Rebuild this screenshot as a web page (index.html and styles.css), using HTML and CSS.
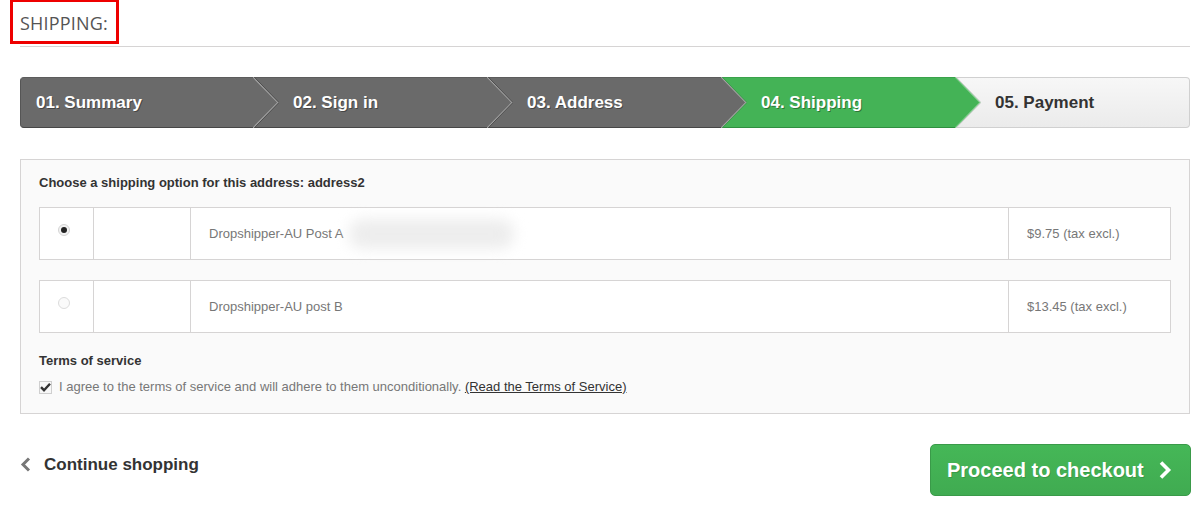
FILE: index.html
```html
<!DOCTYPE html>
<html>
<head>
<meta charset="utf-8">
<link rel="stylesheet" href="styles.css">
</head>
<body>
<div class="page">
  <h1 class="page-heading"><span class="marked">SHIPPING:</span></h1>

  <ul class="steps">
    <li class="done"><span>01. Summary</span>
      <svg class="tip" width="26" height="51" viewBox="0 0 26 51"><polygon points="0,0 25,25.5 0,51" fill="#6a6a6a"/><polyline points="0,0 25,25.5 0,51" fill="none" stroke="#a3a3a3" stroke-width="1.2"/><polyline points="1.2,0 26,25.5 1.2,51" fill="none" stroke="#4f4f4f" stroke-width="1"/></svg>
    </li>
    <li class="done"><span>02. Sign in</span>
      <svg class="tip" width="26" height="51" viewBox="0 0 26 51"><polygon points="0,0 25,25.5 0,51" fill="#6a6a6a"/><polyline points="0,0 25,25.5 0,51" fill="none" stroke="#a3a3a3" stroke-width="1.2"/><polyline points="1.2,0 26,25.5 1.2,51" fill="none" stroke="#4f4f4f" stroke-width="1"/></svg>
    </li>
    <li class="done"><span>03. Address</span>
      <svg class="tip" width="26" height="51" viewBox="0 0 26 51"><polygon points="0,0 25,25.5 0,51" fill="#6a6a6a"/><polyline points="0,0 25,25.5 0,51" fill="none" stroke="#a3a3a3" stroke-width="1.2"/><polyline points="1.2,0 26,25.5 1.2,51" fill="none" stroke="#3f9a4e" stroke-width="1"/></svg>
    </li>
    <li class="current"><span>04. Shipping</span>
      <svg class="tip" width="26" height="51" viewBox="0 0 26 51"><polygon points="0,0 25,25.5 0,51" fill="#44b356"/><polyline points="0,0 25,25.5 0,51" fill="none" stroke="#7fcc8b" stroke-width="1.2"/><polyline points="1.2,0 26,25.5 1.2,51" fill="none" stroke="#d0d0d0" stroke-width="1"/></svg>
    </li>
    <li class="todo"><span>05. Payment</span></li>
  </ul>

  <div class="carrier-box">
    <p class="carrier-title">Choose a shipping option for this address: address2</p>

    <div class="option-row">
      <div class="cell radio-cell"><span class="radio checked"></span></div>
      <div class="cell logo-cell"></div>
      <div class="cell name-cell">Dropshipper-AU Post A <span class="smear"></span></div>
      <div class="cell price-cell">$9.75 (tax excl.)</div>
    </div>

    <div class="option-row">
      <div class="cell radio-cell"><span class="radio"></span></div>
      <div class="cell logo-cell"></div>
      <div class="cell name-cell">Dropshipper-AU post B</div>
      <div class="cell price-cell">$13.45 (tax excl.)</div>
    </div>

    <p class="terms-title">Terms of service</p>
    <p class="terms"><span class="checkbox"><svg width="11" height="10" viewBox="0 0 11 10"><path d="M1 5.2 L4 8.2 L10 1.8" fill="none" stroke="#333" stroke-width="2.4"/></svg></span><span class="terms-text">I agree to the terms of service and will adhere to them unconditionally. <a href="#">(Read the Terms of Service)</a></span></p>
  </div>

  <div class="nav-row">
    <a class="continue" href="#"><svg width="11" height="15" viewBox="0 0 11 15"><path d="M9 1.5 L3 7.5 L9 13.5" fill="none" stroke="#777" stroke-width="3"/></svg>Continue shopping</a>
    <a class="checkout" href="#">Proceed to checkout<svg width="14" height="20" viewBox="0 0 14 20"><path d="M3 2.5 L10.5 10 L3 17.5" fill="none" stroke="#fff" stroke-width="3.6"/></svg></a>
  </div>
</div>
</body>
</html>
```

FILE: styles.css
```css
* { box-sizing: border-box; }
html, body { margin: 0; padding: 0; background: #fff; }
body { font-family: "Liberation Sans", Arial, sans-serif; font-size: 13px; color: #777; }

.page { width: 1170px; margin-left: 20px; }

.page-heading {
  margin: 0;
  height: 47px;
  border-bottom: 1px solid #d6d4d4;
  font-family: "Open Sans", sans-serif;
  font-weight: 400;
  font-size: 18px;
  line-height: 22px;
  letter-spacing: 0.2px;
  color: #555454;
  position: relative;
}
.marked {
  display: inline-block;
  margin-left: -10px;
  margin-top: -1px;
  padding: 10px 8px 7px 7px;
  border: 3px solid #ee0000;
}

.steps {
  list-style: none;
  margin: 30px 0 0 0;
  padding: 0;
  display: flex;
  height: 51px;
}
.steps li {
  position: relative;
  flex: 0 0 234px;
  height: 51px;
  display: flex;
  align-items: center;
  padding-left: 39px;
  font: bold 17px/21px "Liberation Sans", Arial, sans-serif;
  border-top: 1px solid #5c5c5c;
  border-bottom: 1px solid #464646;
}
.steps li:first-child { padding-left: 15px; border-left: 1px solid #555; border-radius: 4px 0 0 4px; }
.steps li span { text-shadow: 1px 1px 0 rgba(0,0,0,0.35); }
.steps .done { background: #6a6a6a; color: #fff; }
.steps .current { background: #44b356; color: #fff; border-top-color: #3aa24b; border-bottom-color: #2f8f3f; }
.steps .todo {
  flex: 1 1 auto;
  background: linear-gradient(#f7f7f7, #ebebeb);
  color: #333;
  border: 1px solid #d0d0d0;
  border-left: 0;
  border-radius: 0 4px 4px 0;
}
.steps .todo span { text-shadow: none; }
.tip { position: absolute; right: -25px; top: -1px; z-index: 2; }

.carrier-box {
  margin-top: 31px;
  border: 1px solid #d6d4d4;
  background: #fafafa;
  padding: 15px 18px 18px 18px;
}
.carrier-title {
  margin: 0 0 16px 0;
  font-weight: bold;
  color: #333;
  line-height: 16px;
}
.option-row {
  display: flex;
  height: 53px;
  border: 1px solid #d6d4d4;
  background: #fff;
  margin-bottom: 20px;
}
.cell { display: flex; align-items: center; border-left: 1px solid #d6d4d4; }
.cell:first-child { border-left: 0; }
.radio-cell { width: 53px; align-items: flex-start; padding-left: 18px; padding-top: 16px; }
.logo-cell { width: 97px; }
.name-cell { width: 818px; padding-left: 18px; color: #777; }
.price-cell { flex: 1; padding-left: 18px; color: #777; }

.radio {
  width: 12px; height: 12px; border-radius: 50%;
  border: 1px solid #dcdcdc;
  background: #fafafa;
  position: relative;
}
.radio.checked { border-color: #d4d4d4; background: #f2f2f2; }
.radio.checked::after {
  content: "";
  position: absolute;
  left: 2px; top: 2px;
  width: 6px; height: 6px; border-radius: 50%;
  background: #222;
}
.smear {
  display: inline-block;
  width: 165px; height: 30px;
  margin-left: 6px;
  background: #ededed;
  border-radius: 14px;
  filter: blur(7px);
}

.terms-title {
  margin: 20px 0 0 0;
  color: #333;
  font-weight: bold;
  line-height: 16px;
}
.terms { margin: 10px 0 0 0; display: flex; align-items: center; line-height: 16px; }
.checkbox {
  flex: 0 0 13px;
  width: 13px; height: 13px;
  border: 1px solid #cfcfcf;
  background: #f7f7f7;
  display: inline-flex; align-items: center; justify-content: center;
  margin-right: 7px;
}
.terms a { color: #333; text-decoration: underline; }

.nav-row {
  margin-top: 30px;
  display: flex;
  justify-content: space-between;
  align-items: flex-start;
}
.continue {
  display: flex; align-items: center;
  margin-top: 10px;
  font: bold 17px/21px "Liberation Sans", Arial, sans-serif;
  color: #333;
  text-decoration: none;
}
.continue svg { margin-right: 13px; }
.checkout {
  display: flex; align-items: center;
  width: 261px; height: 52px;
  margin-right: -1px;
  padding-left: 16px;
  background: linear-gradient(#45b757, #40ab51);
  border: 1px solid #3a9a49;
  border-radius: 5px;
  font: bold 20px/24px "Liberation Sans", Arial, sans-serif;
  color: #fff;
  text-decoration: none;
  text-shadow: 1px 1px 0 rgba(0,0,0,0.15);
}
.checkout svg { margin-left: 14px; }
```
